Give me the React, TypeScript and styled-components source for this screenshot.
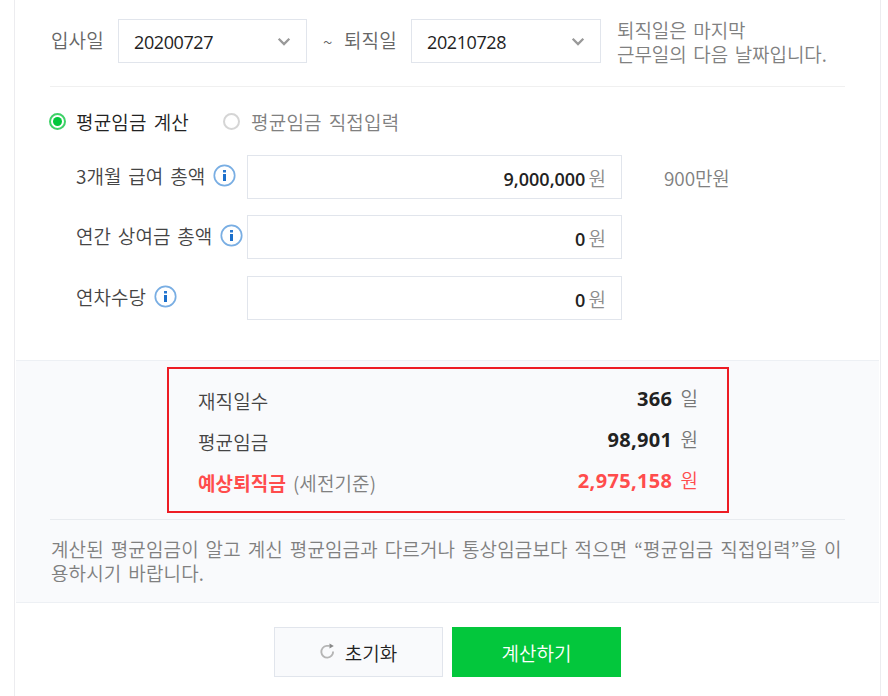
import React from "react";
import styled, { createGlobalStyle } from "styled-components";

const GlobalStyle = createGlobalStyle`
  * { box-sizing: border-box; }
  html, body { margin: 0; background: #fff; }
  body {
    font-family: "Noto Sans CJK KR", sans-serif;
    font-size: 19px;
    font-weight: 350;
    line-height: 24px;
    letter-spacing: 0.1px;
    word-spacing: 2.5px;
    overflow: hidden;
  }
`;

const Card = styled.main`
  width: 867px;
  height: 696px;
  margin-left: 14px;
  border: solid #ececef;
  border-width: 0 1px;
  overflow: hidden;
`;

const PeriodRow = styled.section`
  display: flex;
  align-items: flex-start;
  height: 87px;
  margin: 0 35px;
  padding-top: 19px;
  border-bottom: 1px solid #f0f0f0;
`;

const PeriodLabel = styled.span<{ $width: number }>`
  flex: none;
  width: ${(p) => p.$width}px;
  padding: 9px 0 0 1px;
  color: #666;
  white-space: nowrap;
`;

const Tilde = styled.span`
  flex: none;
  width: 36px;
  padding: 11px 0 0 16px;
  color: #666;
  font-size: 17px;
`;

const DateSelect = styled.button<{ $width: number }>`
  display: flex;
  flex: none;
  align-items: center;
  justify-content: space-between;
  width: ${(p) => p.$width}px;
  height: 44px;
  padding: 1px 15px 0 15px;
  border: 1px solid #e1e5ec;
  background: #fff;
  color: #222;
  font: 400 18px/24px "Open Sans", sans-serif;
  letter-spacing: -0.4px;
`;

const Note = styled.p`
  margin: -1px 0 0 16px;
  color: #808080;
  letter-spacing: -0.08px;
  white-space: nowrap;
`;

const ModeRow = styled.div`
  display: flex;
  height: 68px;
  padding: 21px 0 0 34px;
`;

const Mode = styled.label<{ $active?: boolean }>`
  display: flex;
  align-items: center;
  height: 26px;
  gap: ${(p) => (p.$active ? 10 : 11)}px;
  margin-right: 34px;
  color: ${(p) => (p.$active ? "#222" : "#808080")};
  letter-spacing: 0.2px;
  white-space: nowrap;
`;

const ModeText = styled.span`
  padding-top: 1px;
`;

const Radio = styled.span<{ $active?: boolean }>`
  display: grid;
  place-items: center;
  width: 17px;
  height: 17px;
  border: ${(p) => (p.$active ? "2px solid #3fd268" : "2px solid #d5d5d5")};
  border-radius: 50%;
  &::after {
    content: "";
    width: 9px;
    height: 9px;
    border-radius: 50%;
    background: ${(p) => (p.$active ? "#03c73c" : "transparent")};
  }
`;

const Fields = styled.div`
  display: flex;
  flex-direction: column;
  height: 205px;
  padding-left: 61px;
`;

const FieldRow = styled.div<{ $gap: number }>`
  display: flex;
  height: 44px;
  margin-bottom: ${(p) => p.$gap}px;
`;

const FieldLabel = styled.div`
  display: flex;
  flex: none;
  gap: 8px;
  align-items: center;
  width: 171px;
  height: 42px;
  color: #444;
  letter-spacing: 0.05px;
  white-space: nowrap;
  svg { flex: none; margin-top: -2px; }
`;

const Amount = styled.div`
  display: flex;
  flex: none;
  align-items: center;
  justify-content: flex-end;
  gap: 3px;
  width: 375px;
  padding: 3px 15px 0 0;
  border: 1px solid #e1e5ec;
  color: #8c8c8c;
  b {
    color: #222;
    font: 600 18px/24px "Open Sans", sans-serif;
    letter-spacing: 0;
  }
`;

const Unit = styled.span`
  margin-top: -1px;
`;

const Readable = styled.span`
  margin: 11px 0 0 42px;
  color: #808080;
  letter-spacing: -0.1px;
`;

const Panel = styled.section`
  height: 243px;
  margin: 0 1px;
  padding: 6px 34px 0;
  border: solid #edf0f4;
  border-width: 1px 0;
  background: #f9fafc;
`;

const ResultBox = styled.div`
  width: 562px;
  height: 146px;
  margin-left: 117px;
  padding: 10px 29px 0 29px;
  border: 2px solid #ed1c24;
`;

const ResultRow = styled.div`
  display: flex;
  justify-content: space-between;
  height: 41px;
  color: #444;
`;

const ResultName = styled.div`
  padding-top: 10px;
  letter-spacing: 0.12px;
  strong { color: #ff4c4c; font-weight: 700; }
  span { color: #808080; }
`;

const ResultValue = styled.div<{ $accent?: boolean }>`
  display: flex;
  align-items: center;
  gap: 8px;
  height: 38px;
  color: ${(p) => (p.$accent ? "#ff4c4c" : "#777")};
  b {
    padding-top: 1px;
    color: ${(p) => (p.$accent ? "#ff4c4c" : "#222")};
    font: 700 20px/24px "Open Sans", sans-serif;
    letter-spacing: 0.35px;
  }
`;

const Guide = styled.p`
  margin: 6px 0 0;
  padding: 17px 0 0 1px;
  border-top: 1px solid #e8ebef;
  color: #808080;
  letter-spacing: 0.13px;
  white-space: nowrap;
`;

const Actions = styled.div`
  display: flex;
  gap: 9px;
  padding: 24px 0 0 259px;
`;

const Button = styled.button<{ $primary?: boolean }>`
  display: flex;
  align-items: center;
  justify-content: center;
  gap: 10px;
  width: 169px;
  height: 50px;
  padding: ${(p) => (p.$primary ? "2px 0 0" : "2px 1px 0 0")};
  border: 1px solid ${(p) => (p.$primary ? "#03c73c" : "#e1e5ec")};
  background: ${(p) => (p.$primary ? "#03c73c" : "#f9fafc")};
  color: ${(p) => (p.$primary ? "#fff" : "#222")};
  font: inherit;
  svg { margin-top: -4px; }
`;

const Chevron = () => (
  <svg width="14" height="10" viewBox="0 0 14 10" fill="none">
    <path d="M1.7 1.7 7 7l5.3-5.3" stroke="#999" strokeWidth="2.3" />
  </svg>
);

const Info = () => (
  <svg width="23" height="23" viewBox="0 0 23 23">
    <circle cx="11.5" cy="11.5" r="10.2" fill="#fff" stroke="#79aee3" strokeWidth="1.7" />
    <rect x="10" y="6" width="3" height="2.5" fill="#2878d0" />
    <rect x="10" y="10" width="3" height="7" fill="#1b6fcb" />
  </svg>
);

const Reset = () => (
  <svg width="16" height="17" viewBox="0 0 16 17" fill="none">
    <path d="M10.5 2.9H7.6A5.9 5.9 0 1 0 14.1 8.5" stroke="#b5b5b5" strokeWidth="1.9" />
    <path d="M10.5 0.4v5L14.8 2.9Z" fill="#888" />
  </svg>
);

const fields = [
  { label: "3개월 급여 총액", value: "9,000,000", readable: "900만원", gap: 16 },
  { label: "연간 상여금 총액", value: "0", gap: 17 },
  { label: "연차수당", value: "0", gap: 0 },
];

export default function App() {
  return (
    <>
      <GlobalStyle />
      <Card>
        <PeriodRow>
          <PeriodLabel $width={68}>입사일</PeriodLabel>
          <DateSelect $width={189}>20200727<Chevron /></DateSelect>
          <Tilde>~</Tilde>
          <PeriodLabel $width={68}>퇴직일</PeriodLabel>
          <DateSelect $width={190}>20210728<Chevron /></DateSelect>
          <Note>퇴직일은 마지막<br />근무일의 다음 날짜입니다.</Note>
        </PeriodRow>
        <ModeRow>
          <Mode $active><Radio $active /><ModeText>평균임금 계산</ModeText></Mode>
          <Mode><Radio /><ModeText>평균임금 직접입력</ModeText></Mode>
        </ModeRow>
        <Fields>
          {fields.map((f) => (
            <FieldRow key={f.label} $gap={f.gap}>
              <FieldLabel>{f.label}<Info /></FieldLabel>
              <Amount><b>{f.value}</b><Unit>원</Unit></Amount>
              {f.readable && <Readable>{f.readable}</Readable>}
            </FieldRow>
          ))}
        </Fields>
        <Panel>
          <ResultBox>
            <ResultRow>
              <ResultName>재직일수</ResultName>
              <ResultValue><b>366</b>일</ResultValue>
            </ResultRow>
            <ResultRow>
              <ResultName>평균임금</ResultName>
              <ResultValue><b>98,901</b>원</ResultValue>
            </ResultRow>
            <ResultRow>
              <ResultName><strong>예상퇴직금</strong> <span>(세전기준)</span></ResultName>
              <ResultValue $accent><b>2,975,158</b>원</ResultValue>
            </ResultRow>
          </ResultBox>
          <Guide>
            계산된 평균임금이 알고 계신 평균임금과 다르거나 통상임금보다 적으면 “평균임금 직접입력”을 이<br />
            용하시기 바랍니다.
          </Guide>
        </Panel>
        <Actions>
          <Button><Reset />초기화</Button>
          <Button $primary>계산하기</Button>
        </Actions>
      </Card>
    </>
  );
}
